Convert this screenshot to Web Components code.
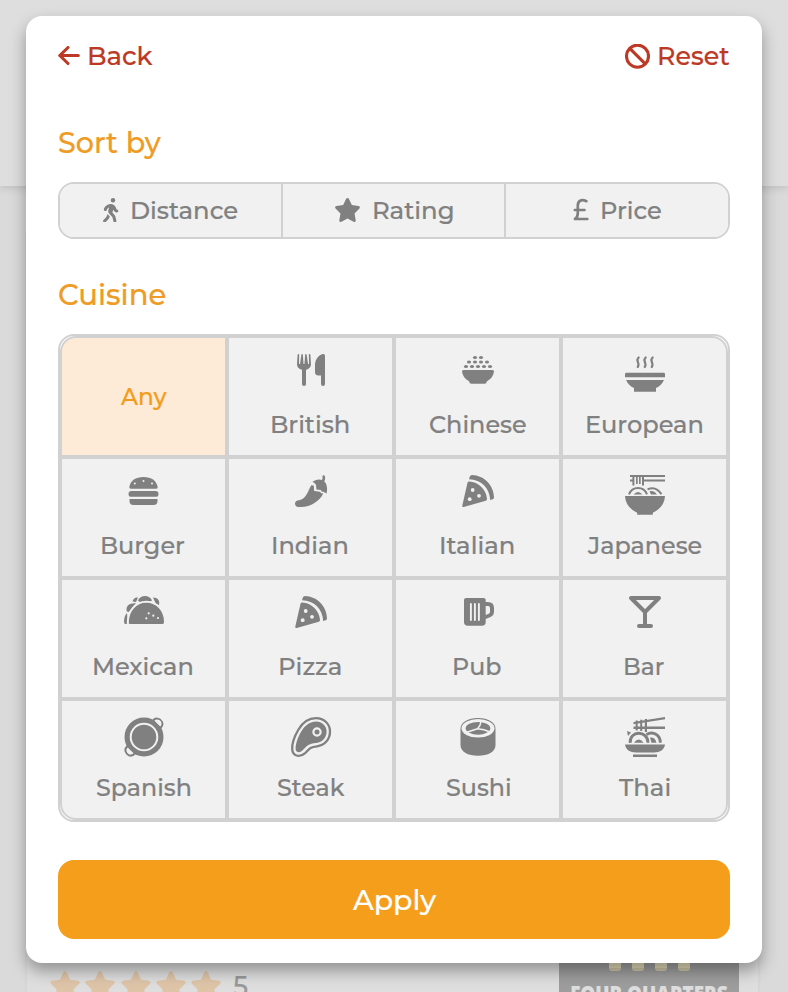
<!DOCTYPE html>
<html lang="en"><head><meta charset="utf-8"><title>Filters</title>
<style>
html,body{margin:0;height:100%;overflow:hidden}
body{font-family:Montserrat,Inter,"Open Sans",sans-serif;font-weight:500;background:#dadada;position:relative}
</style></head><body>
<page-backdrop></page-backdrop>
<filter-modal>
  <text-action slot="back" icon="back" gap="8.5"><fit-text w="63.5" size="24.2">Back</fit-text></text-action>
  <text-action slot="reset" icon="ban" gap="9"><fit-text w="71" size="24.2">Reset</fit-text></text-action>
  <fit-text slot="sort-title" w="102.5" size="27">Sort by</fit-text>
  <sort-group slot="sort">
    <sort-option icon="walk" gap="13.5"><fit-text w="105.5" size="23.3">Distance</fit-text></sort-option>
    <sort-option icon="star" gap="13.5"><fit-text w="79" size="23.3">Rating</fit-text></sort-option>
    <sort-option icon="pound" gap="13.5"><fit-text w="59" size="23.3">Price</fit-text></sort-option>
  </sort-group>
  <fit-text slot="cuisine-title" w="106.5" size="27">Cuisine</fit-text>
  <cuisine-grid slot="cuisine">
    <cuisine-tile selected><fit-text w="47" size="23.3">Any</fit-text></cuisine-tile>
    <cuisine-tile icon="utensils"><fit-text w="77" size="23.3">British</fit-text></cuisine-tile>
    <cuisine-tile icon="rice"><fit-text w="96" size="23.3">Chinese</fit-text></cuisine-tile>
    <cuisine-tile icon="soup"><fit-text w="115.5" size="23.3">European</fit-text></cuisine-tile>
    <cuisine-tile icon="burger"><fit-text w="83" size="23.3">Burger</fit-text></cuisine-tile>
    <cuisine-tile icon="pepper"><fit-text w="74.5" size="23.3">Indian</fit-text></cuisine-tile>
    <cuisine-tile icon="pizza"><fit-text w="73" size="23.3">Italian</fit-text></cuisine-tile>
    <cuisine-tile icon="ramen"><fit-text w="114.5" size="23.3">Japanese</fit-text></cuisine-tile>
    <cuisine-tile icon="taco"><fit-text w="98.5" size="23.3">Mexican</fit-text></cuisine-tile>
    <cuisine-tile icon="pizza"><fit-text w="61" size="23.3">Pizza</fit-text></cuisine-tile>
    <cuisine-tile icon="mug"><fit-text w="47" size="23.3">Pub</fit-text></cuisine-tile>
    <cuisine-tile icon="martini"><fit-text w="39.5" size="23.3">Bar</fit-text></cuisine-tile>
    <cuisine-tile icon="pan"><fit-text w="94.5" size="23.3">Spanish</fit-text></cuisine-tile>
    <cuisine-tile icon="steak"><fit-text w="67.5" size="23.3">Steak</fit-text></cuisine-tile>
    <cuisine-tile icon="sushi"><fit-text w="64" size="23.3">Sushi</fit-text></cuisine-tile>
    <cuisine-tile icon="noodles"><fit-text w="50.5" size="23.3">Thai</fit-text></cuisine-tile>
  </cuisine-grid>
  <fit-text slot="apply" w="84.5" size="27.5">Apply</fit-text>
</filter-modal>
<script>
const C='#f1f1f1';
const pot='stroke="currentColor" fill="none" stroke-linecap="round" stroke-linejoin="round"';
const STAR='<path d="M316.9 18C311.6 7 300.4 0 288.1 0s-23.4 7-28.8 18L195 150.3 51.4 171.5c-12 1.8-22 10.2-25.7 21.7s-.7 24.2 7.9 32.7L137.8 329 113.2 474.7c-2 12 3 24.2 12.9 31.3s23 8 33.8 2.3l128.3-68.5 128.3 68.5c10.8 5.7 23.9 4.9 33.8-2.3s14.9-19.3 12.9-31.3L438.5 329 542.7 225.9c8.6-8.5 11.7-21.2 7.9-32.7s-13.7-19.9-25.7-21.7L381.2 150.3 316.9 18z"/>';
// name: [width, height, viewBox, markup]
const ICONS={
back:[22,20,'0 0 22 20',`<path ${pot} stroke-width="3.1" d="M1.8 9.500H20.3M10 1.500 1.800 9.500l8.200 8"/>`],
ban:[25,25,'0 0 25 25',`<g ${pot} stroke-width="3.1"><circle cx="12.5" cy="12.2" r="11"/><path d="m5 4.700 15 15"/></g>`],
walk:[15.4,24.5,'0 0 320 512','<path d="M160 48a48 48 0 1 1 96 0 48 48 0 1 1 -96 0zM126.5 199.3c-1 .4-1.9 .8-2.9 1.2l-8 3.5c-16.4 7.3-29 21.2-34.7 38.2l-2.6 7.8c-5.6 16.8-23.7 25.8-40.5 20.2s-25.8-23.7-20.2-40.5l2.6-7.8c11.4-34.1 36.6-61.9 69.4-76.5l8-3.5c20.8-9.2 43.3-14 66.1-14c44.6 0 84.8 26.8 101.9 67.9L281 232.7l21.4 10.7c15.8 7.9 22.2 27.1 14.3 42.9s-27.1 22.2-42.9 14.3L247 287.3c-10.3-5.2-18.4-13.8-22.8-24.5l-9.6-23-19.3 65.5 49.5 54c5.4 5.9 9.2 13 11.2 20.8l23 92.1c4.3 17.1-6.1 34.5-23.3 38.8s-34.5-6.1-38.8-23.3l-22-88.1-70.7-77.1c-14.8-16.1-20.3-38.6-14.7-59.7l16.9-63.5zM68.7 398l25-62.4c2.1 3 4.5 5.8 7 8.6l40.7 44.4-14.5 36.2c-2.4 6-6 11.5-10.6 16.1L54.6 502.6c-12.5 12.5-32.8 12.5-45.3 0s-12.5-32.8 0-45.3L68.7 398z"/>'],
star:[27,24,'0 0 576 512',STAR],
pound:[16,24,'0 0 16 24',`<path ${pot} stroke-width="2.7" d="M13.4 3.200C8.300 .7 4.800 3 4.800 7.600v7.300c0 3-.8 5-2.800 6.100h12.3M1.800 12h9.700"/>`],
utensils:[40,40,'0 0 40 40','<path d="M8.2 0 8 9.5c0 .8 1 .8 1.100 0L10.300.9c.2-1.200 1.500-1.200 1.600 0l.6 8.600c0 .7 1 .7 1 0l.6-8.600c.1-1.200 1.400-1.200 1.600 0L17 9.500c0 .8 1.100.8 1.100 0L17.800 0c1-.2 1.500.2 1.600.9L20 9.700c.2 3.100-2 5.300-5 6V30a2 2 0 0 1-4 0V15.700c-3.200-.7-5.200-2.900-5-6L6.600.9C6.800.2 7.400-.2 8.200 0z"/><path d="M34 1.800V30a2 2 0 0 1-4 0v-8.500h-2.500a3.500 3.500 0 0 1-3.500-3.500V11C24 5 28.500.3 32.300 0A1.700 1.700 0 0 1 34 1.800z"/>'],
rice:[40,40,'0 0 40 40','<path d="M5.500 16h29q1.700 0 1.500 1.600-.6 6.300-7.200 9.900 0 2.300-2.300 2.300h-13q-2.300 0-2.300-2.300Q4.600 23.900 4 17.600 3.800 16 5.500 16z"/>'+[[17,3.5],[23,3.5],[11,8],[17,8],[23,8],[29,8],[8,12.500],[14,12.500],[20,12.500],[26,12.500],[32,12.500]].map(p=>`<ellipse cx="${p[0]}" cy="${p[1]}" rx="2.050" ry="1.550"/>`).join('')],
soup:[40,40,'0 0 40 40',`<g ${pot} stroke-width="2.200"><path d="M13.700 3.500c-4 3.200 2 5.600-1 9.500M20.700 3.500c-4 3.200 2 5.600-1 9.500M27.700 3.500c-4 3.200 2 5.600-1 9.500"/></g><path d="M1.500 18.700h37q1.500 0 1.500 1.400v3.100H0v-3.100q0-1.400 1.500-1.400zM1 26h38q-2.700 5.700-8 8v3.700H9V34Q3.700 31.700 1 26z"/>`],
burger:[40,40,'0 0 40 40',`<path d="M5.300 12C6.500 5.500 11.500 2 19.500 2s13 3.500 14.200 10q.2 1.800-1.500 1.800H6.800Q5.100 13.800 5.300 12zM5.500 24h28v2q0 4-4 4h-20q-4 0-4-4z"/><rect x="4.500" y="16" width="30" height="5.800" rx="2.900"/><g fill="${C}"><circle cx="10.800" cy="8.500" r="1"/><circle cx="19.500" cy="6" r="1"/><circle cx="28" cy="8.500" r="1"/></g>`],
pepper:[40,40,'0 0 40 40','<path d="M20.200 10.300l2.600.1.400 5.600 5.700.8 1.800 1.700 1.700-.2C28.500 26.300 20 32 10 32H7.500C5.300 32 4 30.500 4 28.600c0-2.100 1.600-3.100 4-3.300 7.200-.9 9-9.500 12.200-15z"/><path d="M32.600.2q1.500 0 1.600 2.300.1 2.400-1 3.800Q36.600 9.500 36 16l-.4 2.600-3.800-2.200-.9.500-1-1.800-4.500-.6-.4-4.700-2.200-2.300-1.500-.5C24 4.500 28.200 3.800 30.900 5c1.200-1.400.5-3.500.5-3.700Q31.500.2 32.600.2z"/>'],
pizza:[40,40,'0 0 40 40',`<path d="M11.300 6.500C20.500 7 28 14.200 29 23.500q.2 1.800-1.200 2.200L5.700 32q-1.800.2-1.400-1.500L9.500 7.800q.4-1.500 1.800-1.300zM14 0C26 .4 35.700 10 36 22.300q.1 1.600-1.300 2l-2.500.8C31.600 13 23.400 4.600 11 4.300l.8-2.800Q12.400 0 14 0z"/><g fill="${C}"><circle cx="14.700" cy="15" r="1.900"/><circle cx="21" cy="20.800" r="1.900"/><circle cx="11.700" cy="24.200" r="1.900"/></g>`],
ramen:[40,40,'0 0 40 40',`<path d="M0 21h40q-.4 9.700-9.500 15.300l-2.700 1.500v2H12.200v-2l-2.700-1.500Q.4 30.700 0 21zM5 0h35v2H5zM5 4.600h4v2H5zM17 4.600h23v2H17zM7.400 0h2v10.500h-2zM11 0h1.700v9H11zM14 0h1.700v9H14zM17 0h2v10.500h-2z"/><g fill="none" stroke="currentColor" stroke-width="2"><path d="M4 19.300a9.600 9.600 0 0 1 18 0M22.500 14.300Q31 10.500 36.500 19.300"/></g><path d="M8.500 19.500q4.500-5 9 0zM24.500 16.200q4.500-1 7.500 3.200h-6z"/>`],
taco:[40,40,'0 0 40 40',`<path d="M0 26c0-4 1-7 3-9l1 11H1.500Q0 28 0 26zM2.800 15.500C1.800 11 4 7.800 8.500 7.500L12 7l-7 9zM8.500 5.500C9.500 2 11.500 1 14 1.500l-2 4.500zM14 4.500C16-1.500 26-1.500 28 4.500L24 7h-7zM29 1.500c5 0 7 3.500 6 7.500l-3-1z"/><path stroke="${C}" stroke-width="2" d="M3.800 27C3.800 14.700 11.500 5.800 22.300 5.800S41 14.700 41 26q0 3-2.300 3H6q-2.200 0-2.200-2z"/><g fill="${C}"><circle cx="24.700" cy="17.300" r="1.100"/><circle cx="22.300" cy="22.300" r="1.100"/><circle cx="29.300" cy="19.700" r="1.100"/><circle cx="34" cy="22" r="1.100"/></g>`],
mug:[40,40,'0 0 40 40',`<path fill-rule="evenodd" d="M8 2h17.700q2 0 2 2v2H30q6 0 6 6v3.500q0 4-3.500 5.500l-4.800 2v3q0 3.800-3.800 3.800h-14Q6 29.800 6 26V4q0-2 2-2zm19.700 8v9l3-1.200q1.300-.6 1.300-2V12q0-2-2-2z"/><path d="M12.900 8v16M16.900 8v16M20.900 8v16" stroke="${C}" stroke-width="1.900" stroke-linecap="round"/>`],
martini:[40,40,'0 0 40 40',`<path ${pot} stroke-width="4" d="M6 2h28L20 16zM20 16v14M14 30h12"/>`],
pan:[40,40,'0 0 40 40',`<g ${pot} stroke-width="2"><path d="M29 3.500Q32-.3 36.300 2.900 40.500 7 36.500 11M3.500 29Q-.5 33 3.200 37 7 40.500 11 36.500"/></g><circle cx="20" cy="20" r="19.500"/><circle cx="20" cy="20" r="13.300" fill="none" stroke="${C}" stroke-width="2"/><path d="M31 4.200 35.800 9l1.200-1.300q1.200-2.200-.7-3.900T32.300 2.900zM4.200 31l4.800 4.800-1.300 1.200q-2.200 1.200-3.900-.7T2.900 32.300z" fill="${C}"/>`],
steak:[40,40,'0 0 40 40',`<path ${pot} stroke-width="2.300" d="M1.200 32C1 27 3 20 7.500 12.500 12 4.800 18.500 1.100 25 1.100 33 1.100 39 7 39 14.500c0 8-5.500 14-13 14.800-7 .7-8 2.800-11.500 6.500C8 41.500 1.500 38.500 1.200 32z"/><path d="M4.600 31.500c0-4.500 2-11 5.800-17.200C14.300 8 19.300 4.500 25 4.500c6.200 0 10.600 4.500 10.600 10 0 6.200-4.200 10.900-10.400 11.400-7.700.6-9.700 3.300-13.300 7.200C8.500 36.700 4.600 35.800 4.600 31.500z"/><circle cx="26" cy="15" r="3.600" fill="none" stroke="${C}" stroke-width="2.200"/>`],
sushi:[40,40,'0 0 40 40',`<path d="M2.500 12C2.500 5 10 1 20 1s17.500 4 17.500 11v16C37.500 35 30 38.700 20 38.700S2.500 35 2.500 28z"/><ellipse cx="20" cy="11.300" rx="16.500" ry="9.300" fill="${C}"/><ellipse cx="20" cy="11.300" rx="12.300" ry="6.400"/><path d="M23 4.500Q22.500 9 19.500 11.800L8 15.500M19.500 11.800Q26 12 32 15" fill="none" stroke="${C}" stroke-width="1.500"/>`],
noodles:[40,40,'0 0 40 40',`<path d="M0 27.500h40c-.5 5-5 8-11 8H11c-6 0-10.500-3-11-8zM8 37.500h24V40H8zM8.500 5 40 0v2.200L8.500 7.300zM8.500 9.600H40v2.300H8.500zM10.700 3.600h2v10h-2zM15.200 2.800h2V14h-2zM19.800 2H22v13h-2.200zM2 14l4 1.500L3 19z"/><g fill="none" stroke="currentColor" stroke-width="2.900"><path d="M5.200 25.800C4.200 13.200 23 13 23 25.800M21.500 17.500C28 13.500 35.500 18 35.300 25.800"/></g><path d="M9 25.700q4.800-6.500 9.600 0zM25 20.500q5.300-.5 6.500 5.200h-5z"/>`]
};
const svg=n=>{const[w,h,v,m]=ICONS[n];return `<svg width="${w}" height="${h}" viewBox="${v}" fill="currentColor" aria-hidden="true">${m}</svg>`};
const define=(tag,render,after)=>customElements.define(tag,class extends HTMLElement{
 connectedCallback(){if(this.shadowRoot)return;this.attachShadow({mode:'open'}).innerHTML=render(this);after&&after(this)}
});
const ctx=document.createElement('canvas').getContext('2d');
// Label whose visible ink spans the requested width: sized to a whole pixel by default,
// or condensed horizontally at a fixed size when "stretch" is set.
define('fit-text',()=>`<style>:host{display:block;flex:none;height:30px;line-height:30px;white-space:nowrap;text-align:left;-webkit-text-stroke:.2px currentColor}span{display:inline-block;transform-origin:0 50%}</style><span><slot></slot></span>`,el=>{
 const w=+el.getAttribute('w'),sp=el.shadowRoot.querySelector('span'),stretch=el.hasAttribute('stretch');
 let s=+el.getAttribute('size');
 const fam=stretch?'"Open Sans", sans-serif':'Montserrat, Inter, "Open Sans", sans-serif',wt=stretch?800:500;
 const measure=()=>{ctx.font=`${wt} ${s}px ${fam}`;const m=ctx.measureText(el.textContent);return[m.actualBoundingBoxLeft,m.actualBoundingBoxLeft+m.actualBoundingBoxRight]};
 let[l,full]=measure();
 if(!stretch){s=s===23.3?24:Math.round(s*w/full);[l,full]=measure()}
 el.style.cssText=`width:${w}px;font:${wt} ${s}px/30px ${fam}`;
 sp.style.transform=`translateX(${l*w/full}px) scaleX(${w/full})`;
});
define('text-action',e=>`<style>:host{display:flex;align-items:center;gap:${e.getAttribute('gap')}px;color:#bc3a25}svg{display:block}</style>${svg(e.getAttribute('icon'))}<slot></slot>`);
define('sort-option',e=>`<style>:host{display:flex;align-items:center;justify-content:center;gap:${e.getAttribute('gap')}px;color:gray;background:${C};border-left:2px solid #d1d1d1}:host(:first-child){border-left:0}svg{display:block;margin-top:-1px}</style>${svg(e.getAttribute('icon'))}<slot></slot>`);
define('sort-group',()=>`<style>:host{display:grid;grid-template-columns:221px 223px 1fr;box-sizing:border-box;height:57px;border:2px solid #d1d1d1;border-radius:16px;overflow:hidden}</style><slot></slot>`);
define('cuisine-tile',e=>`<style>:host{display:flex;flex-direction:column;align-items:center;box-sizing:border-box;border:2px solid #d1d1d1;padding-top:16px;background:${C};color:gray}:host([selected]){background:#fdead7;color:#f39c1b;justify-content:center;padding:0}:host(:nth-child(1)){border-top-left-radius:16px}:host(:nth-child(4)){border-top-right-radius:16px}:host(:nth-child(13)){border-bottom-left-radius:16px}:host(:nth-child(16)){border-bottom-right-radius:16px}svg{display:block;margin-bottom:16px;overflow:visible}</style>${e.hasAttribute('icon')?svg(e.getAttribute('icon')):''}<slot></slot>`);
define('cuisine-grid',()=>`<style>:host{display:grid;grid-template:repeat(4,121px)/repeat(4,1fr);box-sizing:border-box;border:2px solid #d1d1d1;border-radius:16px}</style><slot></slot>`);
define('filter-modal',()=>`<style>
:host{position:absolute;left:26px;top:16px;width:736px;height:947px;box-sizing:border-box;padding:24px 32px;background:#fff;border-radius:16px;box-shadow:0 8px 16px rgba(0,0,0,.34);display:flex;flex-direction:column}
header{display:flex;justify-content:space-between;height:32px;align-items:center}
.title{color:#ee9c25;height:30px;padding-left:1px}.one{margin-top:56px}.two{margin-top:41px}
.sort{margin-top:24px}.grid{margin-top:24px}
button{margin:38px 0 0;border:0;border-radius:16px;height:79px;background:#f59e1b;color:#fff;font:inherit;display:flex;align-items:center;justify-content:center;padding:0}
</style><header><slot name="back"></slot><slot name="reset"></slot></header>
<div class="title one"><slot name="sort-title"></slot></div><div class="sort"><slot name="sort"></slot></div>
<div class="title two"><slot name="cuisine-title"></slot></div><div class="grid"><slot name="cuisine"></slot></div>
<button><slot name="apply"></slot></button>`);
define('page-backdrop',()=>`<style>
:host{display:block;height:992px;position:relative;overflow:hidden}
.top{height:186px;background:#dedede;box-shadow:0 2px 8px rgba(0,0,0,.13)}
.card{position:absolute;left:27px;right:30px;top:230px;height:800px;background:#dedede;box-shadow:0 0 4px rgba(0,0,0,.05)}
.stars{position:absolute;left:49px;top:971px;display:flex;align-items:flex-start;gap:3.300px;color:#dfc5a8}
.stars svg{width:32px;height:29px;display:block}
.stars fit-text{margin:0 0 0 8px;color:#999}
.logo{position:absolute;left:559px;top:940px;width:180px;height:90px;background:#9d9d9d;color:#dedede;overflow:hidden}
.prongs{display:flex;gap:11px;padding:23px 0 0 50px}.prongs i{width:12px;height:5px;background:#e0dab8;border-bottom:3px solid #cbc5a6;border-radius:0 0 3px 3px}
.logo fit-text{margin:7px 0 0 12px}
</style><div class="top"></div><div class="card"></div><div class="stars">${svg('star').repeat(5)}<fit-text w="15" size="24">5</fit-text></div><div class="logo"><div class="prongs"><i></i><i></i><i></i><i></i></div><fit-text stretch w="156" size="22">FOUR QUARTERS</fit-text></div>`);
</script></body></html>
